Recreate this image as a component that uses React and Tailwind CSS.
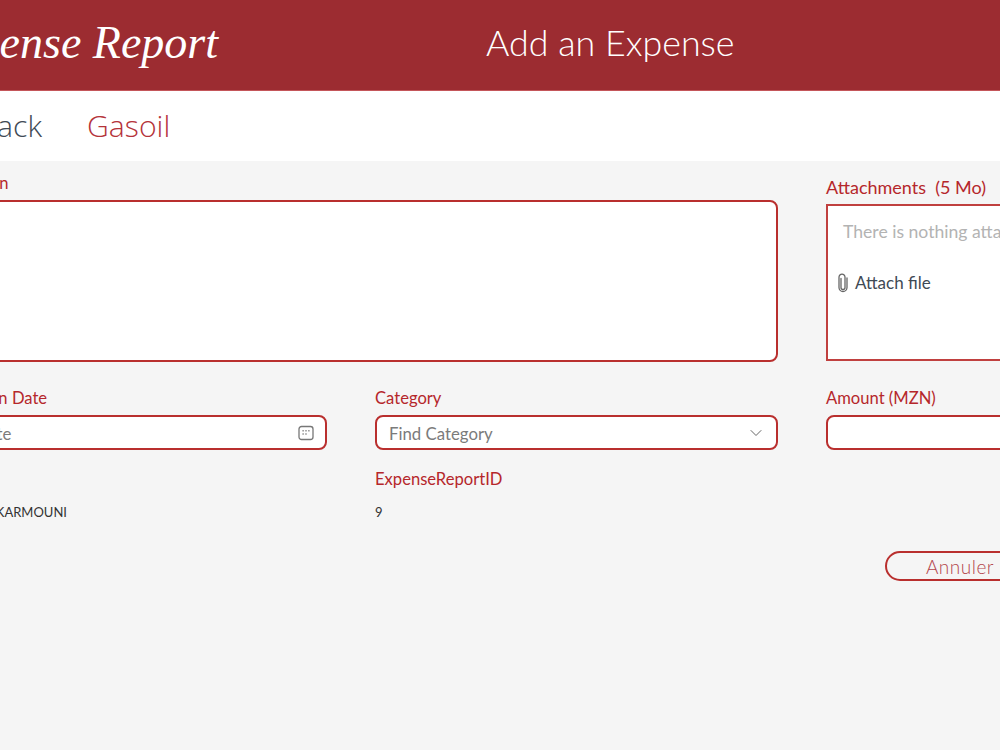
import { ChevronDown } from 'lucide-react';

const labelCls = "block text-[16.6px] leading-[20px] text-[#b5272b] font-['Lato',sans-serif]";
const inputCls = "h-[35px] w-full rounded-[8px] border-2 border-[#b92f2e] bg-white flex items-center justify-between px-[12px] text-[16.8px] text-[#7b7b7b] font-['Lato',sans-serif]";

function CalendarIcon() {
  return (
    <svg width="16" height="16" viewBox="0 0 16 16" fill="none" stroke="#777" strokeWidth="1.3" className="-mr-px">
      <rect x="1" y="1.5" width="14" height="13" rx="2.5" />
      <path d="M4.5 5.7h1.2M7.4 5.7h1.2M10.3 5.7h1.2M4.5 9h1.2M7.4 9h1.2" strokeWidth="1.5" />
    </svg>
  );
}

function ClipIcon() {
  return (
    <svg width="12" height="20" viewBox="0 0 12 20" fill="none" stroke="#666" strokeWidth="1.3" strokeLinecap="round">
      <path d="M4 5.5v9a2 2 0 0 0 4 0V4.2a3 3 0 0 0-6 0v10.3a4 4 0 0 0 8 0V5" />
    </svg>
  );
}

export default function App() {
  return (
    <div className="w-[1000px] h-[750px] overflow-hidden bg-[#f5f5f5]">
      <div className="w-[1305px] ml-[-76px]">
        <header className="h-[91px] bg-[#9c2c31] border-b border-[#c4565a] flex items-center pb-[5px] text-white">
          <div className="w-[294px] text-right whitespace-nowrap text-[46px] italic leading-none font-['Liberation_Serif',cursive]">
            Expense Report
          </div>
          <div className="ml-[268px] text-[35.8px] font-light whitespace-nowrap font-['Lato',sans-serif]">
            Add an Expense
          </div>
        </header>

        <nav className="h-[70px] bg-white flex items-center gap-[45px] text-[30.2px] font-light font-['Open_Sans',sans-serif]">
          <span className="text-[#3f4a55] w-[118px] text-right">Back</span>
          <span className="text-[#b5333a]">Gasoil</span>
        </nav>

        <main className="grid grid-cols-[403px_403px_403px] gap-x-[48px] pt-[12px]">
          <div className="col-span-2">
            <label className={labelCls}>Description</label>
            <div className="mt-[7px] h-[162px] rounded-[8px] border-2 border-[#b92f2e] bg-white" />
          </div>
          <div className="pt-[5px]">
            <label className="block -mt-px mb-px text-[18px] leading-[20px] text-[#b5272b] font-['Lato',sans-serif]">Attachments&nbsp; (5 Mo)</label>
            <div className="mt-[7px] h-[157px] border-2 border-[#c0403f] bg-white pl-[9px] pt-[15px] font-['Lato',sans-serif]">
              <div className="pl-[6px] text-[17.6px] leading-[22px] text-[#b3b3b3] whitespace-nowrap">There is nothing attached.</div>
              <div className="mt-[29px] flex items-center gap-[6px] text-[17px] leading-[22px] text-[#3f4a55]">
                <ClipIcon />
                Attach file
              </div>
            </div>
          </div>

          <div className="mt-[26px]">
            <label className={labelCls}>Transaction Date</label>
            <div className={`${inputCls} mt-[7px]`}>
              <span className="pt-[2px]">Set a date</span>
              <CalendarIcon />
            </div>
          </div>
          <div className="mt-[26px]">
            <label className={labelCls}>Category</label>
            <div className={`${inputCls} mt-[7px]`}>
              <span className="pt-[2px]">Find Category</span>
              <ChevronDown size={20} strokeWidth={1.2} className="text-[#666] -mr-[2px]" />
            </div>
          </div>
          <div className="mt-[26px]">
            <label className={labelCls}>Amount (MZN)</label>
            <div className={`${inputCls} mt-[7px]`} />
          </div>

          <div className="mt-[19px]">
            <label className={labelCls}>Employee</label>
            <div className="mt-[13px] text-[13px] leading-[20px] text-[#333] font-['Lato',sans-serif]">Mohammed KARMOUNI</div>
          </div>
          <div className="mt-[19px]">
            <label className={labelCls}>ExpenseReportID</label>
            <div className="mt-[13px] text-[13px] leading-[20px] text-[#333] font-['Lato',sans-serif]">9</div>
          </div>
          <div className="pl-[59px] pt-[101px]">
            <button className="h-[30px] w-[150px] rounded-full border-2 border-[#b92f2e] text-[19px] font-light tracking-[0.5px] text-[#b4474d] font-['Lato',sans-serif]">
              Annuler
            </button>
          </div>
        </main>
      </div>
    </div>
  );
}
